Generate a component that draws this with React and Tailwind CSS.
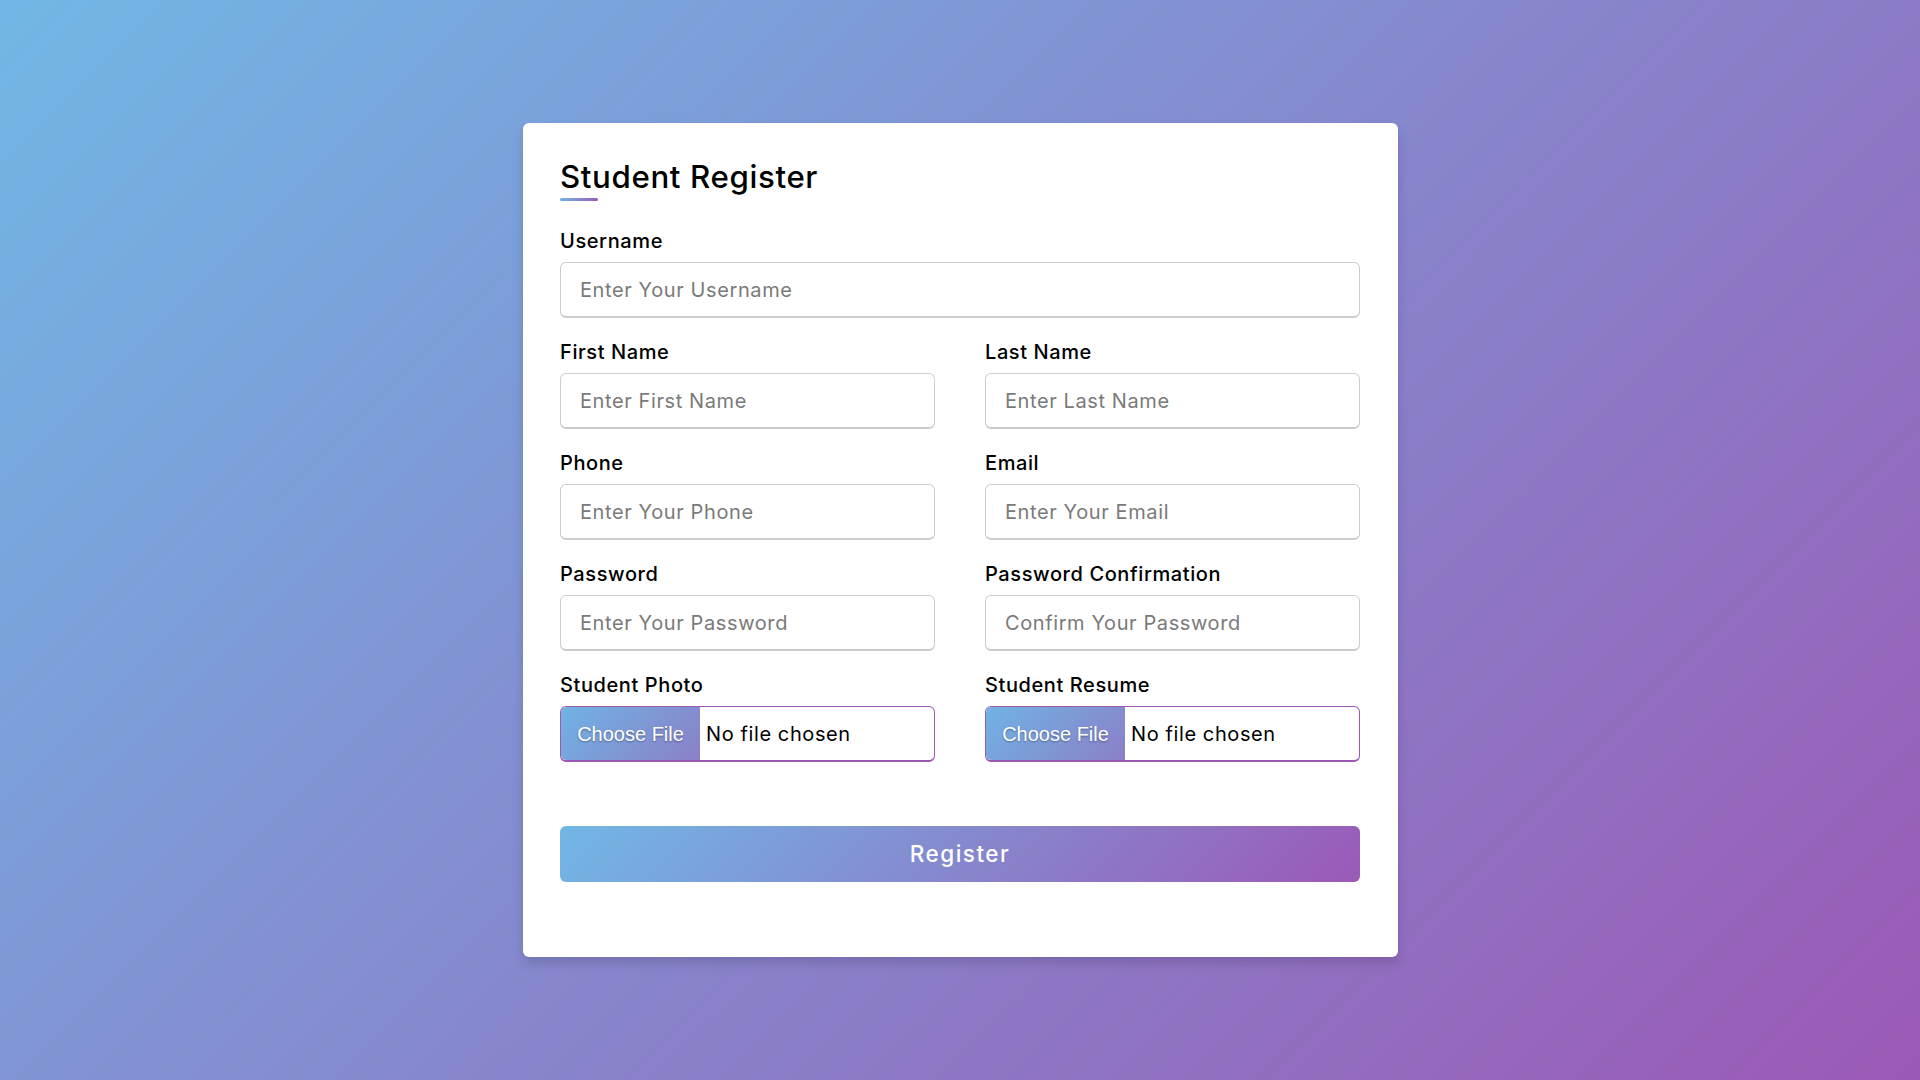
const rows = [
  [{ label: 'Username', placeholder: 'Enter Your Username', full: true }],
  [
    { label: 'First Name', placeholder: 'Enter First Name' },
    { label: 'Last Name', placeholder: 'Enter Last Name' },
  ],
  [
    { label: 'Phone', placeholder: 'Enter Your Phone' },
    { label: 'Email', placeholder: 'Enter Your Email' },
  ],
  [
    { label: 'Password', placeholder: 'Enter Your Password', type: 'password' },
    { label: 'Password Confirmation', placeholder: 'Confirm Your Password', type: 'password' },
  ],
]

function Field({ label, placeholder, type = 'text', full }) {
  return (
    <div className={full ? 'col-span-2' : ''}>
      <span className="mb-[6.25px] block text-[20px] font-medium leading-[30px] tracking-[0.03em] text-black">{label}</span>
      <input
        type={type}
        placeholder={placeholder}
        className="h-[56px] w-full rounded-[6px] border border-b-2 border-[#cccccc] pl-[19px] text-[20px] tracking-[0.03em] text-black outline-none placeholder:text-[#7a7a7a]"
      />
    </div>
  )
}

function FileField({ label }) {
  return (
    <div>
      <span className="mb-[6.25px] block text-[20px] font-medium leading-[30px] tracking-[0.03em] text-black">{label}</span>
      <div className="flex h-[56px] w-full items-stretch overflow-hidden rounded-[6px] border border-b-2 border-[#9b59b6] bg-white">
        <span className="flex w-[139px] items-center justify-center rounded-l-[5px] bg-[linear-gradient(135deg,#70b3e4,#8b7fc8)] font-['Liberation_Sans',Arial,sans-serif] text-[20px] text-white [text-shadow:0_1px_2px_rgba(0,0,0,0.35)]">
          Choose File
        </span>
        <span className="ml-[6px] flex items-center text-[20px] tracking-[0.03em] text-black">No file chosen</span>
      </div>
    </div>
  )
}

export default function App() {
  return (
    <div className="flex min-h-screen items-center justify-center bg-[linear-gradient(135deg,#71b7e6,#9b59b6)] font-['Inter',sans-serif]">
      <div className="w-[875px] rounded-[6px] bg-white px-[37.5px] py-[31.25px] shadow-[0_6px_12px_rgba(0,0,0,0.15)]">
        <div className="relative text-[31.25px] font-medium leading-[47px] tracking-[0.02em] text-black">
          Student Register
          <span className="absolute bottom-0 left-0 h-[3.5px] w-[37.5px] rounded-full bg-[linear-gradient(135deg,#71b7e6,#9b59b6)]" />
        </div>

        <form className="mt-[25px]" onSubmit={(e) => e.preventDefault()}>
          <div className="grid grid-cols-2 gap-x-[50px] gap-y-[18.75px]">
            {rows.flat().map((f) => (
              <Field key={f.label} {...f} />
            ))}
            <FileField label="Student Photo" />
            <FileField label="Student Resume" />
          </div>

          <button
            type="submit"
            className="mb-[43.75px] mt-[64px] h-[56px] w-full rounded-[6px] bg-[linear-gradient(135deg,#71b7e6,#9b59b6)] text-[22.5px] font-medium tracking-[1.5px] text-white"
          >
            Register
          </button>
        </form>
      </div>
    </div>
  )
}
